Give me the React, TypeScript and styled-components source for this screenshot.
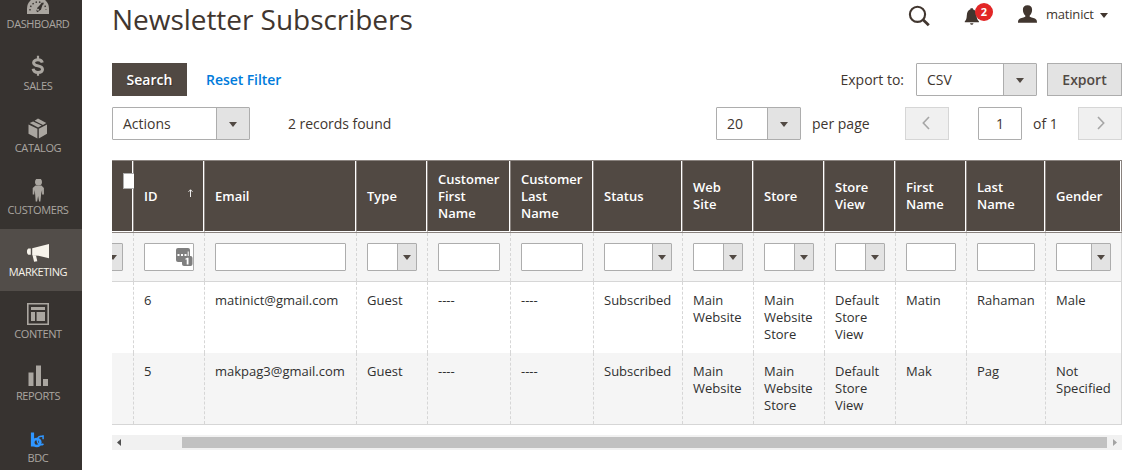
import React from 'react';
import styled, { createGlobalStyle, css } from 'styled-components';

const GlobalStyle = createGlobalStyle`
  *, *::before, *::after { box-sizing: border-box; }
  html, body { margin: 0; padding: 0; background: #fff; }
  body {
    font-family: 'Open Sans', 'Noto Sans', sans-serif;
    font-size: 14px;
    line-height: 19px;
    color: #41362f;
    overflow: hidden;
  }
  button, input { font: inherit; color: inherit; margin: 0; }
`;

const Page = styled.div`
  display: flex;
  width: 1136px;
  height: 470px;
  overflow: hidden;
`;

/* Sidebar */

const Sidebar = styled.nav`
  flex: none;
  width: 82px;
  height: 470px;
  overflow: hidden;
  background: #373330;
`;

const MenuList = styled.div`
  margin-top: -19px;
`;

const MenuItem = styled.a<{ $active?: boolean }>`
  display: flex;
  flex-direction: column;
  align-items: center;
  width: 82px;
  height: 62px;
  padding: 12px 6px 0 0;
  color: ${(p) => (p.$active ? '#f7f3eb' : '#aaa6a0')};
  background: ${(p) => (p.$active ? '#524d49' : 'transparent')};

  svg {
    flex: none;
    display: block;
    width: 24px;
    height: 24px;
    fill: currentColor;
  }
`;

const MenuLabel = styled.span`
  height: 15px;
  margin-top: -1px;
  font-size: 11px;
  line-height: 15px;
  letter-spacing: -0.4px;
  white-space: nowrap;
  text-transform: uppercase;
`;

/* Main column */

const Main = styled.main`
  flex: none;
  width: 1010px;
  margin-left: 30px;
`;

const Header = styled.header`
  display: flex;
  align-items: flex-start;
  justify-content: space-between;
  height: 63px;
`;

const Title = styled.h1`
  margin: 0;
  font-size: 28px;
  font-weight: 400;
  line-height: 38px;
  letter-spacing: -0.04px;
  white-space: nowrap;
`;

const HeaderTools = styled.div`
  display: flex;
  width: 214px;
  height: 30px;

  svg { display: block; flex: none; }
`;

const SearchTool = styled.div`
  width: 56px;
  padding: 5px 0 0 0;
`;

const BellTool = styled.div`
  position: relative;
  width: 54px;
  padding: 7px 0 0 0;
`;

const Badge = styled.span`
  position: absolute;
  left: 11px;
  top: 3px;
  width: 18px;
  height: 18px;
  border-radius: 9px;
  background: #e22626;
  color: #fff;
  font-size: 11px;
  font-weight: 700;
  line-height: 18px;
  text-align: center;
`;

const UserTool = styled.div`
  display: flex;
  padding-top: 5px;
`;

const UserName = styled.span`
  width: 54px;
  margin-left: 9px;
  font-size: 13px;
  line-height: 19px;
  letter-spacing: -0.2px;
`;

const Caret = styled.i`
  width: 0;
  height: 0;
  border: 4px solid transparent;
  border-top: 5px solid #41362f;
  border-bottom: 0;
`;

/* Toolbars */

const Bar = styled.div`
  display: flex;
  align-items: center;
  height: 33px;
  margin-bottom: 11px;
`;

const PagerBar = styled(Bar)`
  margin-bottom: 20px;
`;

const Push = styled.div`
  display: flex;
  align-items: center;
  margin-left: auto;
`;

const Button = styled.button<{ $primary?: boolean }>`
  width: 75px;
  height: 33px;
  padding: 0 0 1px;
  border: 1px solid ${(p) => (p.$primary ? '#514943' : '#adadad')};
  border-radius: 0;
  background: ${(p) => (p.$primary ? '#514943' : '#e3e3e3')};
  color: ${(p) => (p.$primary ? '#fff' : '#514943')};
  font-weight: 600;
  ${(p) => p.$primary && css`text-shadow: 1px 1px 0 rgba(0, 0, 0, 0.3);`}
`;

const ResetLink = styled.a`
  margin-left: 19px;
  color: #007bdb;
  font-weight: 600;
  letter-spacing: -0.06px;
`;

const SelectBox = styled.div<{ $width?: number; $small?: boolean }>`
  display: flex;
  flex: none;
  width: ${(p) => (p.$width ? `${p.$width}px` : '100%')};
  height: ${(p) => (p.$small ? 28 : 33)}px;
  border: 1px solid #adadad;
  border-radius: 1px;
  background: #fff;
`;

const SelectValue = styled.span`
  flex: 1;
  min-width: 0;
  padding-left: 10px;
  line-height: 31px;
`;

const SelectButton = styled.span<{ $small?: boolean }>`
  display: flex;
  flex: none;
  align-items: center;
  justify-content: center;
  width: ${(p) => (p.$small ? 19 : 33)}px;
  border-left: 1px solid #adadad;
  background: #e3e3e3;
`;

const SelectCaret = styled(Caret)`
  border-top-color: #514943;
  margin-top: 1px;
`;

const Records = styled.span`
  margin-left: 38px;
  letter-spacing: -0.04px;
`;

const ExportLabel = styled.span`
  margin-right: 12px;
`;

const ExportGap = styled.div`
  width: 10px;
`;

const PerPage = styled.span`
  width: 93px;
  margin-left: 11px;
`;

const PageInput = styled.input`
  width: 44px;
  height: 33px;
  margin-left: 29px;
  padding: 0;
  border: 1px solid #adadad;
  border-radius: 1px;
  text-align: center;
`;

const PageTotal = styled.span`
  width: 45px;
  margin-left: 11px;
`;

const PageButton = styled.button`
  display: flex;
  align-items: center;
  justify-content: center;
  width: 44px;
  height: 33px;
  padding: 0 3px 2px 0;
  border: 1px solid #d6d6d6;
  background: #f0f0f0;

  svg { display: block; }
`;

const NextButton = styled(PageButton)`
  padding: 0 0 2px 2px;
`;

/* Data grid */

const columnTemplate = css`
  display: grid;
  grid-template-columns: 21px 71px 152px 71px 83px 83px 89px 71px 71px 71px 71px 79px 77px;
`;

const Table = styled.div`
  width: 1010px;
  overflow: hidden;
  font-size: 13px;
  line-height: 17px;
`;

const HeadRow = styled.div`
  ${columnTemplate}
  height: 73px;
  border-top: 1px solid #8a837f;
  border-bottom: 1px solid #8a837f;
  background: #514943;
`;

const HeadCell = styled.div`
  position: relative;
  display: flex;
  align-items: center;
  padding: 0 9px 0 10px;
  border-left: 1px solid #8a837f;
  border-right: 1px solid #fff;
  border-bottom: 1px solid #fff;
  color: #fff;
  font-weight: 600;

  &:first-child { border-left: 0; }
  &:last-child { border-right: 1px solid #8a837f; }
  &:last-child::after {
    content: '';
    position: absolute;
    top: 0;
    right: 0;
    bottom: 0;
    width: 1px;
    background: #fff;
  }
`;

const HeadCheckbox = styled.span`
  position: absolute;
  z-index: 1;
  left: 11px;
  top: 12px;
  width: 11px;
  height: 16px;
  border: 1px solid #adadad;
  border-right: 0;
  background: #fff;
`;

const SortArrow = styled.svg`
  margin: 0 1px 6px auto;
`;

const FilterRow = styled.div`
  ${columnTemplate}
  height: 49px;
  border-bottom: 1px solid #d6d6d6;
  background: #f5f5f5;
`;

const cellEdges = css`
  border-left: 1px dashed #d6d6d6;
  &:first-child { border-left: 0; }
  &:last-child { border-right: 1px solid #d6d6d6; }
`;

const FilterCell = styled.div`
  ${cellEdges}
  position: relative;
  display: flex;
  min-width: 0;
  padding: 10px;

  &:first-child { justify-content: flex-end; padding-left: 0; }
`;

const FilterInput = styled.input`
  width: 100%;
  min-width: 0;
  height: 28px;
  padding: 0 4px;
  border: 1px solid #adadad;
  border-radius: 1px;
  background: #fff;
`;

const FieldHelper = styled.svg`
  position: absolute;
  left: 42px;
  top: 15px;
`;

const BodyRow = styled.div<{ $odd?: boolean }>`
  ${columnTemplate}
  height: 71px;
  background: ${(p) => (p.$odd ? '#f5f5f5' : '#fff')};
`;

const BodyCell = styled.div`
  ${cellEdges}
  min-width: 0;
  padding: 10px 0 0 10px;
  color: #303030;
`;

const CellText = styled.span<{ $width?: number }>`
  display: block;
  width: ${(p) => (p.$width ? `${p.$width}px` : 'auto')};
`;

const TableEnd = styled.div`
  height: 1px;
  background: #d6d6d6;
`;

const ScrollTrack = styled.div`
  display: flex;
  align-items: center;
  height: 15px;
  margin-top: 10px;
  background: #f1f1f1;

  svg { display: block; flex: none; }
`;

const ScrollThumb = styled.div`
  width: 925px;
  height: 11px;
  margin-left: 55px;
  background: #c1c1c1;
`;

/* Menu drawings */

const DashboardIcon = () => (
  <svg viewBox="0 0 24 24">
    <path d="M1 21v-5.500a11 11 0 0 1 22 0V21z" />
    <g fill="none" stroke="#373330">
      <path d="M4 17.500a8 8 0 0 1 16 -1" strokeWidth="1.400" strokeDasharray="1.500 2" />
      <path d="M16.500 10l-5 7" strokeWidth="1.500" />
    </g>
    <path d="M17.500 9l-2.500 7.500-3.500 2.700-1.200-1.200 1.500-3.700z" fill="#373330" />
    <circle cx="12" cy="16.800" r="1" />
  </svg>
);

const SalesIcon = () => (
  <svg viewBox="0 0 24 24">
    <g fill="none" stroke="currentColor" transform="translate(0 -0.700)">
      <path d="M16.300 8.400C15.800 6.400 14.200 5.400 12 5.400S7.600 6.500 7.600 8.400c0 4.400 8.900 2 8.900 6.500 0 2.100-2 3.200-4.500 3.200s-4.500-1.200-4.900-3.700" strokeWidth="3" />
      <path d="M12 1.500v3.800M12 18v3.500" strokeWidth="2.200" />
    </g>
  </svg>
);

const CatalogIcon = () => (
  <svg viewBox="0 0 24 24">
    <path d="M2.500 7.500l8.900 4.200v9.800l-8.900-4.700zM12.800 11.700l8.200-4.200v9.300l-8.200 4.700z" />
    <path d="M3.700 6.100l3.400-1.700 8.600 4.200-3.600 1.800zM8.600 3.700L12 1.500l8.300 4.600-3.300 1.800z" />
  </svg>
);

const CustomersIcon = () => (
  <svg viewBox="0 0 24 24">
    <g transform="translate(0 -1)">
      <circle cx="12.500" cy="3.900" r="3.500" />
      <path d="M9.500 7.400h6l2.400 2.600v6.600h-1.800v-4.600l-.9 3.600-.8 8h-1.300l-1-5.500-1 5.500H9.700l-.6-8-.8-3.600v4.600H6.700V10z" />
    </g>
  </svg>
);

const MarketingIcon = () => (
  <svg viewBox="0 0 24 24">
    <path d="M6.200 7.200L23 3v14.300l-10.500-2.500-4.700-.3-1.600-.4z" />
    <path d="M4.800 7.600v6.100H2.400C.5 12.800.5 8.500 2.400 7.600zM6.500 14l3.500.5 1.300 5.700-3.200.6z" />
  </svg>
);

const ContentIcon = () => (
  <svg viewBox="0 0 24 24">
    <path fillRule="evenodd" d="M1 0h22v22H1zM2.600 1.600v18.800h18.800V1.600z" />
    <path d="M5 4h14v3H5zM5 9h4v9H5zM10.600 9H19v9h-8.400z" />
  </svg>
);

const ReportsIcon = () => (
  <svg viewBox="0 0 24 24">
    <path d="M2.500 7.500h5V21h-5zM10 .5h5V21h-5zM17 14h5v7h-5z" />
  </svg>
);

const BdcIcon = () => (
  <svg viewBox="0 0 24 24" color="#2f96ff">
    <g fill="none" stroke="currentColor">
      <path d="M6.500 5.500v14" strokeWidth="3.200" />
      <circle cx="10.800" cy="15.500" r="3.600" strokeWidth="2.500" />
      <path d="M17.300 9.500c-3.800-1.200-6 .8-6 4.300 0 3.600 3.200 5 6.200 3.200M17.100 8.300v3.900" strokeWidth="1.500" />
    </g>
  </svg>
);

const menu = [
  { label: 'Dashboard', Icon: DashboardIcon },
  { label: 'Sales', Icon: SalesIcon },
  { label: 'Catalog', Icon: CatalogIcon },
  { label: 'Customers', Icon: CustomersIcon },
  { label: 'Marketing', Icon: MarketingIcon, active: true },
  { label: 'Content', Icon: ContentIcon },
  { label: 'Reports', Icon: ReportsIcon },
  { label: 'BDC', Icon: BdcIcon },
];

type Filter = 'input' | 'select';

const columns: { title: string; filter: Filter; width?: number }[] = [
  { title: 'ID', filter: 'input' },
  { title: 'Email', filter: 'input' },
  { title: 'Type', filter: 'select' },
  { title: 'Customer First Name', filter: 'input' },
  { title: 'Customer Last Name', filter: 'input' },
  { title: 'Status', filter: 'select' },
  { title: 'Web Site', filter: 'select', width: 50 },
  { title: 'Store', filter: 'select', width: 50 },
  { title: 'Store View', filter: 'select', width: 50 },
  { title: 'First Name', filter: 'input', width: 50 },
  { title: 'Last Name', filter: 'input' },
  { title: 'Gender', filter: 'select', width: 56 },
];

const rows = [
  ['6', 'matinict@gmail.com', 'Guest', '----', '----', 'Subscribed', 'Main Website', 'Main Website Store', 'Default Store View', 'Matin', 'Rahaman', 'Male'],
  ['5', 'makpag3@gmail.com', 'Guest', '----', '----', 'Subscribed', 'Main Website', 'Main Website Store', 'Default Store View', 'Mak', 'Pag', 'Not Specified'],
];

const Select = ({ value, width }: { value: string; width: number }) => (
  <SelectBox $width={width}>
    <SelectValue>{value}</SelectValue>
    <SelectButton><SelectCaret /></SelectButton>
  </SelectBox>
);

const FilterSelect = ({ width }: { width?: number }) => (
  <SelectBox $small $width={width}>
    <SelectValue />
    <SelectButton $small><SelectCaret /></SelectButton>
  </SelectBox>
);

export default function App() {
  return (
    <Page>
      <GlobalStyle />
      <Sidebar>
        <MenuList>
          {menu.map(({ label, Icon, active }) => (
            <MenuItem key={label} $active={active}>
              <Icon />
              <MenuLabel>{label}</MenuLabel>
            </MenuItem>
          ))}
        </MenuList>
      </Sidebar>

      <Main>
        <Header>
          <Title>Newsletter Subscribers</Title>
          <HeaderTools>
            <SearchTool>
              <svg width="22" height="22" viewBox="0 0 22 22" fill="none" stroke="#41362f">
                <circle cx="9.500" cy="9.300" r="7.600" strokeWidth="2.100" />
                <path d="M14.800 14.500l6 5.700" strokeWidth="2.800" />
              </svg>
            </SearchTool>
            <BellTool>
              <svg width="16" height="18" viewBox="0 0 16 18" fill="#41362f">
                <path d="M.8 15.200v-1C2.300 12.800 2.600 11.500 2.800 8.500 3 4.700 4.300 2.900 6.500 2.300V1.200h2.400v1.100c2.300.6 3.500 2.400 3.700 6.200.2 3 .8 4.300 2.300 5.700v1zM6 16.200h3.500q-.4 1.500-1.750 1.500T6 16.200z" />
              </svg>
              <Badge>2</Badge>
            </BellTool>
            <UserTool>
              <svg width="19" height="18" viewBox="0 0 19 18" fill="#41362f">
                <path d="M9.500.3c3 0 4.600 1.700 4.600 4.500 0 2.400-.9 4.600-2.400 5.700v1.200c2.500 1 5.200 1.400 6.400 2.700.7.700.9 1.800.9 3.400H0c0-1.600.2-2.700.9-3.400 1.200-1.300 3.900-1.700 6.400-2.700v-1.200C5.800 9.400 4.900 7.200 4.900 4.800 4.900 2 6.500.3 9.500.3z" />
              </svg>
              <UserName>matinict</UserName>
              <svg width="8" height="14" viewBox="0 0 8 14" fill="#41362f">
                <path d="M0 8h8l-4 5z" />
              </svg>
            </UserTool>
          </HeaderTools>
        </Header>

        <Bar>
          <Button $primary>Search</Button>
          <ResetLink>Reset Filter</ResetLink>
          <Push>
            <ExportLabel>Export to:</ExportLabel>
            <Select value="CSV" width={121} />
            <ExportGap />
            <Button>Export</Button>
          </Push>
        </Bar>

        <PagerBar>
          <Select value="Actions" width={138} />
          <Records>2 records found</Records>
          <Push>
            <Select value="20" width={85} />
            <PerPage>per page</PerPage>
            <PageButton>
              <svg width="8" height="14" viewBox="0 0 8 14" fill="none" stroke="#a6a6a6" strokeWidth="1.600">
                <path d="M7 1L1.300 7 7 13" />
              </svg>
            </PageButton>
            <PageInput defaultValue="1" />
            <PageTotal>of 1</PageTotal>
            <NextButton>
              <svg width="8" height="14" viewBox="0 0 8 14" fill="none" stroke="#a6a6a6" strokeWidth="1.600">
                <path d="M1 1l5.700 6L1 13" />
              </svg>
            </NextButton>
          </Push>
        </PagerBar>

        <Table>
          <HeadRow>
            <HeadCell><HeadCheckbox /></HeadCell>
            {columns.map((c) => (
              <HeadCell key={c.title}>
                <CellText $width={c.width}>{c.title}</CellText>
                {c.title === 'ID' && (
                  <SortArrow width="5" height="8" viewBox="0 0 5 8" fill="none" stroke="#fff" strokeWidth="0.900">
                    <path d="M2.500 8V.8M.5 2.800l2-2 2 2" />
                  </SortArrow>
                )}
              </HeadCell>
            ))}
          </HeadRow>

          <FilterRow>
            <FilterCell>
              <FilterSelect width={50} />
            </FilterCell>
            {columns.map((c) => (
              <FilterCell key={c.title}>
                {c.filter === 'input' ? <FilterInput /> : <FilterSelect />}
                {c.title === 'ID' && (
                  <FieldHelper width="17" height="18" viewBox="0 0 17 18">
                    <rect x="0" y="0" width="14" height="14" rx="2" fill="#7f7f7f" />
                    <path d="M1.500 6h2v2h-2zM5 6h2v2H5zM8.500 6h2v2h-2zM11.700 3.500h1V9h-1z" fill="#fff" />
                    <rect x="6" y="8" width="10.500" height="10" rx="2" fill="#7f7f7f" />
                    <path d="M9.300 10.800l2-1h1.200v6.700h-1.800v-5h-1.400z" fill="#fff" />
                  </FieldHelper>
                )}
              </FilterCell>
            ))}
          </FilterRow>

          {rows.map((row, r) => (
            <BodyRow key={row[0]} $odd={r % 2 === 1}>
              <BodyCell />
              {row.map((value, i) => (
                <BodyCell key={columns[i].title}>
                  <CellText $width={columns[i].width}>{value}</CellText>
                </BodyCell>
              ))}
            </BodyRow>
          ))}
          <TableEnd />
        </Table>

        <ScrollTrack>
          <svg width="15" height="15" viewBox="0 0 15 15" fill="#505050">
            <path d="M9 4v7L5 7.500z" />
          </svg>
          <ScrollThumb />
          <svg width="15" height="15" viewBox="0 0 15 15" fill="#a3a3a3">
            <path d="M6 4v7l4-3.500z" />
          </svg>
        </ScrollTrack>
      </Main>
    </Page>
  );
}
